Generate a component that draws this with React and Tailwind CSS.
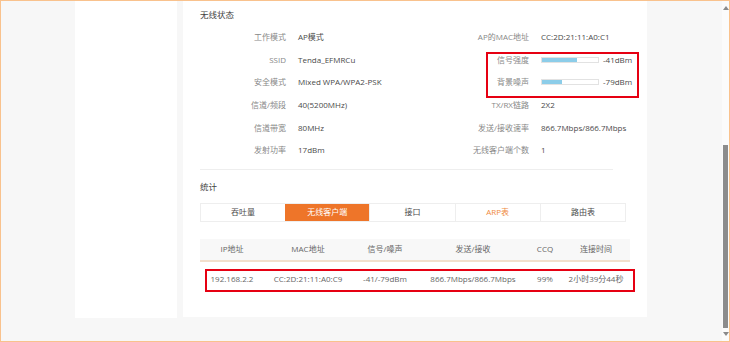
import React from 'react';

const font = { fontFamily: '"Open Sans", "Noto Sans CJK SC", sans-serif' };

const leftRows = [
  ['工作模式', 'AP模式'],
  ['SSID', 'Tenda_EFMRCu'],
  ['安全模式', 'Mixed WPA/WPA2-PSK'],
  ['信道/频段', '40(5200MHz)'],
  ['信道带宽', '80MHz'],
  ['发射功率', '17dBm'],
];

const rightRows = [
  ['AP的MAC地址', 'CC:2D:21:11:A0:C1'],
  ['信号强度', { bar: 35, text: '-41dBm' }],
  ['背景噪声', { bar: 20, text: '-79dBm' }],
  ['TX/RX链路', '2X2'],
  ['发送/接收速率', '866.7Mbps/866.7Mbps'],
  ['无线客户端个数', '1'],
];

const tabs = ['吞吐量', '无线客户端', '接口', 'ARP表', '路由表'];

const cols = [
  { name: 'IP地址', w: 'w-[64px]', v: '192.168.2.2' },
  { name: 'MAC地址', w: 'w-[88px]', v: 'CC:2D:21:11:A0:C9' },
  { name: '信号/噪声', w: 'w-[66px]', v: '-41/-79dBm' },
  { name: '发送/接收', w: 'w-[110px]', v: '866.7Mbps/866.7Mbps' },
  { name: 'CCQ', w: 'w-[34px]', v: '99%' },
  { name: '连接时间', w: 'w-[68px]', v: '2小时39分44秒' },
];

function Bar({ fill, text }) {
  return (
    <div className="flex items-center">
      <div className="w-[58px] h-[6px] border border-[#e2e2e2] bg-white flex">
        <div className="h-full bg-[#8ccde9]" style={{ width: fill }} />
      </div>
      <span className="ml-[4px]">{text}</span>
    </div>
  );
}

export default function App() {
  return (
    <div
      className="w-[730px] h-[342px] border border-[#f9c28d] bg-[#f7f7f7] flex overflow-hidden text-[8px] leading-[12px]"
      style={font}
    >
      <div className="w-[74px] shrink-0" />
      {/* side panel */}
      <div className="w-[102px] h-[317px] bg-white shrink-0" />
      <div className="w-[6px] shrink-0" />

      {/* main panel */}
      <div className="w-[464px] h-[316px] bg-white shrink-0 pl-[17px] pt-[8px]">
        <div className="text-[#444] text-[8.5px]">无线状态</div>

        <div className="flex mt-[5px] relative">
          <div className="w-[221px]">
            {leftRows.map(([l, v]) => (
              <div key={l} className="h-[22.6px] flex items-center">
                <span className="w-[86px] text-right text-[#888]">{l}</span>
                <span className="ml-[12px] text-[#4a4a4a]">{v}</span>
              </div>
            ))}
          </div>
          <div>
            {rightRows.map(([l, v]) => (
              <div key={l} className="h-[22.6px] flex items-center">
                <span className="w-[108px] text-right text-[#888]">{l}</span>
                <span className="ml-[12px] text-[#4a4a4a]">
                  {typeof v === 'string' ? v : <Bar fill={v.bar} text={v.text} />}
                </span>
              </div>
            ))}
          </div>
          {/* highlight */}
          <div className="absolute left-[286px] top-[26px] w-[153px] h-[46px] border-2 border-[#e60012]" />
        </div>

        <div className="w-[413px] h-px bg-[#eeeeee] mt-[7px]" />

        <div className="text-[#444] text-[8.5px] mt-[11px]">统计</div>

        {/* tabs */}
        <div className="flex mt-[10px] w-[426px] border border-[#eeeeee]">
          {tabs.map((t, i) => (
            <div
              key={t}
              className={
                i === 1
                  ? 'flex-1 h-[17px] flex items-center justify-center bg-[#ee7529] text-white'
                  : i === 3
                  ? 'flex-1 h-[17px] flex items-center justify-center text-[#ef8a3e] border-l border-[#eeeeee]'
                  : i === 0
                  ? 'flex-1 h-[17px] flex items-center justify-center text-[#4a4a4a]'
                  : 'flex-1 h-[17px] flex items-center justify-center text-[#4a4a4a] border-l border-[#eeeeee]'
              }
            >
              {t}
            </div>
          ))}
        </div>

        {/* table */}
        <div className="mt-[17px] w-[430px] relative">
          <div className="flex h-[23px] bg-[#f8f8f8] border-b-2 border-[#f2dfcc] text-[#666]">
            {cols.map((c) => (
              <div key={c.name} className={`${c.w} flex items-center justify-center`}>
                {c.name}
              </div>
            ))}
          </div>
          <div className="flex h-[34px] text-[#666]">
            {cols.map((c) => (
              <div key={c.name} className={`${c.w} flex items-center justify-center whitespace-nowrap`}>
                {c.v}
              </div>
            ))}
          </div>
          <div className="absolute left-[5px] top-[30px] w-[430px] h-[23px] border-2 border-[#e60012]" />
        </div>
      </div>

      <div className="flex-1" />

      {/* scrollbar */}
      <div className="w-[7px] shrink-0 bg-[#fbfbfb] flex flex-col items-center">
        <div className="mt-[5px] w-0 h-0 border-l-[3px] border-r-[3px] border-b-[4px] border-l-transparent border-r-transparent border-b-[#8a8a8a]" />
        <div className="mt-[135px] w-[5px] h-[183px] bg-[#8c8c8c]" />
        <div className="mt-[4px] w-0 h-0 border-l-[3px] border-r-[3px] border-t-[4px] border-l-transparent border-r-transparent border-t-[#8a8a8a]" />
      </div>
    </div>
  );
}
